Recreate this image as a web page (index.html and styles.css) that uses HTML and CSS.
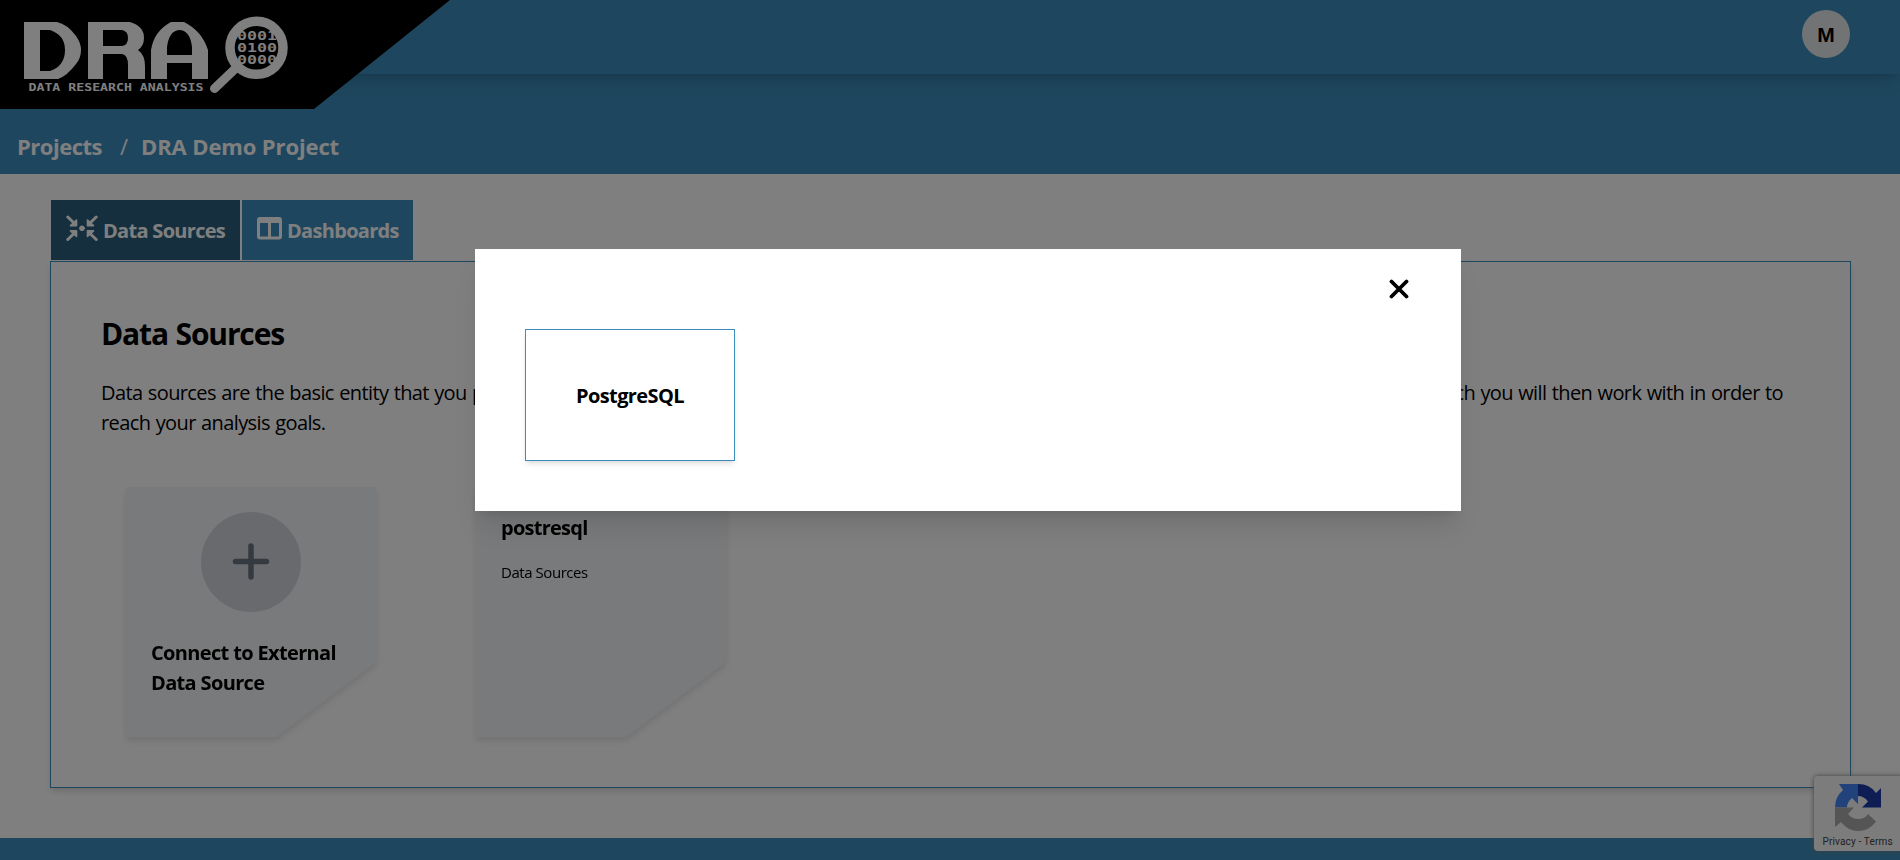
FILE: index.html
```html
<!DOCTYPE html>
<html lang="en">
<head>
<meta charset="utf-8">
<title>DRA Demo Project</title>
<link rel="stylesheet" href="styles.css">
</head>
<body>
<div class="page">
  <header class="topbar">
    <div class="avatar">M</div>
  </header>
  <div class="brand">
    <svg class="logo" width="270" height="80" viewBox="20 14 270 80" fill="#fff">
      <path fill-rule="evenodd" d="M24 22H57Q67 24 76 36Q81 43 81 50Q81 58 76 64Q67 76 58 79H24ZM40 30V71H50Q65 66 65 50Q65 35 50 30Z"/>
      <path fill-rule="evenodd" d="M88 22H130Q144 26 144 38Q144 46 138 50Q145 55 145 66V79H128V65Q128 55 122 54H103V79H88ZM103 30V46H122Q128 45 128 38Q128 31 122 30Z"/>
      <path fill-rule="evenodd" d="M151 79V50Q154 31 171 22H184Q202 31 208 50V79H192V63H167V79ZM167 55H192V47Q190 30 179 30Q169 31 167 47Z"/>
      <text class="tagline" x="28.500" y="91" textLength="175" lengthAdjust="spacingAndGlyphs">DATA RESEARCH ANALYSIS</text>
      <g class="digits">
        <text x="237" y="39.500" textLength="40" lengthAdjust="spacingAndGlyphs">0001</text>
        <text x="237" y="51.500" textLength="40" lengthAdjust="spacingAndGlyphs">0100</text>
        <text x="237" y="63.800" textLength="40" lengthAdjust="spacingAndGlyphs">0000</text>
      </g>
      <circle cx="256.500" cy="47.800" r="26.500" fill="none" stroke="#fff" stroke-width="9.500"/>
      <path d="M237 67L214.500 88.500" stroke="#fff" stroke-width="9" stroke-linecap="round"/>
    </svg>
  </div>
  <nav class="crumbs"><span class="crumb-home">Projects</span><span class="crumb-sep">/</span><span class="crumb-current">DRA Demo Project</span></nav>
  <main class="content">
    <div class="tabs">
      <div class="tab tab-active">
        <svg class="tab-icon" width="32" height="26" viewBox="0 0 32 26" fill="#fff" stroke="#fff" stroke-width="3" stroke-linecap="round" stroke-linejoin="round">
          <path d="M1.800 2L8 8M30.200 2L24 8M1.800 24.500L8 18.500M30.200 24.500L24 18.500"/>
          <path stroke-width="1.600" d="M10.500 5V10.700H4.500ZM21.500 5V10.700H27.500ZM10.500 21.500V15.800H4.500ZM21.500 21.500V15.800H27.500Z"/>
          <circle cx="16" cy="13.300" r="2.400" stroke-width="1"/>
        </svg>
        <span class="tab-label">Data Sources</span>
      </div>
      <div class="tab">
        <svg class="tab-icon" width="25" height="26" viewBox="0 0 25 26"><path fill="#fff" fill-rule="evenodd" d="M3 2H22Q25 2 25 5V21.500Q25 24.500 22 24.500H3Q0 24.500 0 21.500V5Q0 2 3 2ZM3 8V21.500H11V8ZM14 8V21.500H22V8Z"/></svg>
        <span class="tab-label">Dashboards</span>
      </div>
    </div>
    <section class="panel">
      <h1 class="title">Data Sources</h1>
      <p class="intro"><span class="intro-line"><span>Data sources are the basic entity that you provide</span><span>which you will then work with in order to</span></span><span class="intro-last">reach your analysis goals.</span></p>
      <div class="cards">
        <div class="card-shadow"><div class="card">
          <div class="plus"><svg width="38" height="38" viewBox="0 0 38 38"><path d="M19 3V34M3.500 18.500H34.500" stroke="#6b7280" stroke-width="5.500" stroke-linecap="round"/></svg></div>
          <div class="card-title connect">Connect to External<br>Data Source</div>
        </div></div>
        <div class="card-shadow"><div class="card">
          <div class="card-title db-name">postresql</div>
          <div class="card-sub">Data Sources</div>
        </div></div>
      </div>
    </section>
  </main>
  <footer class="footer"></footer>
</div>
<aside class="captcha">
  <svg width="48" height="48" viewBox="0 0 48 48">
    <path fill="#1c3aa9" d="M24 0Q36 0 42 9L47 4V23.500H28L34 17.500Q30 12 24 12Z"/>
    <path fill="#4285f4" d="M24 0V20L18 14Q13 18 13 23.500H1Q1 13 9 6L5 0Z"/>
    <path fill="#ababab" d="M1 23.500H20L14 30Q18 35 24 35Q31 35 34 30L42 37.500Q35 47 24 47Q14 47 7 38L1 43Z"/>
  </svg>
  <div class="captcha-text">Privacy - Terms</div>
</aside>
<div class="overlay">
  <div class="modal">
    <div class="modal-head"><svg width="20" height="20" viewBox="0 0 20 20"><path d="M2.500 2.500L17.500 17.500M17.500 2.500L2.500 17.500" stroke="#000" stroke-width="3.800" stroke-linecap="round"/></svg></div>
    <div class="option"><span>PostgreSQL</span></div>
  </div>
</div>
</body>
</html>
```

FILE: styles.css
```css
* { box-sizing: border-box; }
body { margin: 0; height: 860px; overflow: hidden; background: #fff; color: #000; font-family: "Open Sans", "Noto Sans", sans-serif; }
.page { display: flex; flex-direction: column; height: 860px; }
.topbar { position: relative; height: 74px; flex: none; display: flex; justify-content: flex-end; padding: 10px 50px 0 0; background: #3c8dbc; box-shadow: 0 10px 15px -3px rgba(0,0,0,.13), 0 4px 6px -4px rgba(0,0,0,.13); }
.avatar { width: 48px; height: 48px; border-radius: 50%; background: #e5e7eb; display: flex; align-items: center; justify-content: center; font: 700 21px "Liberation Sans", sans-serif; padding-top: 2px; }
.brand { position: absolute; top: 0; left: 0; width: 450px; height: 109px; padding: 14px 20px; background: #000; clip-path: polygon(0 0, 100% 0, 314px 100%, 0 100%); }
.logo { display: block; }
.tagline { font: bold 10px "DejaVu Sans Mono", monospace; }
.digits { font: bold 13px "DejaVu Sans Mono", monospace; }
.crumbs { height: 100px; flex: none; background: #3c8dbc; color: #fff; font-size: 22px; font-weight: 700; line-height: 30px; padding: 57px 17px 0; display: flex; }
.crumb-home { width: 103px; letter-spacing: -.5px; }
.crumb-sep { width: 21px; font-weight: 400; }
.crumb-current { letter-spacing: -.12px; }
.content { flex: 1; padding: 26px 49px 0 50px; }
.tabs { display: flex; gap: 2px; padding-left: 1px; height: 61px; }
.tab { height: 60px; width: 171px; background: #3c8dbc; color: #fff; display: flex; padding: 15px 15px 0; gap: 5px; }
.tab-active { width: 189px; background: #2a5f7f; }
.tab-icon { flex: none; }
.tab-label { font-size: 20px; font-weight: 700; line-height: 32px; white-space: nowrap; letter-spacing: -.7px; }
.panel { height: 527px; border: 1px solid #3c8dbc; padding: 50px; box-shadow: 0 4px 6px -1px rgba(0,0,0,.15); }
.title { margin: 0; font-size: 30px; line-height: 44px; letter-spacing: -1.15px; word-spacing: 1px; }
.intro { margin: 22px 0 0; font-size: 20px; line-height: 30px; letter-spacing: -.6px; word-spacing: .7px; }
.intro-line { display: flex; justify-content: space-between; width: 1682px; white-space: nowrap; }
.cards { display: flex; gap: 100px; padding: 49px 0 0 25px; }
.card-shadow { filter: drop-shadow(0 4px 3px rgba(0,0,0,.1)); }
.card { width: 250px; height: 250px; background: #f3f4f6; padding: 25px; clip-path: polygon(0 0, 100% 0, 100% 70%, 60% 100%, 0 100%); }
.plus { width: 100px; height: 100px; margin: 0 auto; border-radius: 50%; background: #d1d5db; display: flex; align-items: center; justify-content: center; }
.card-title { font-size: 20px; font-weight: 700; line-height: 30px; white-space: nowrap; letter-spacing: -.65px; }
.connect { margin-top: 26px; }
.db-name { padding-top: 1px; letter-spacing: -.75px; }
.card-sub { font-size: 15px; line-height: 24px; margin-top: 17px; letter-spacing: -.45px; }
.footer { height: 22px; flex: none; background: #3c8dbc; }
.captcha { position: absolute; left: 1814px; top: 776px; width: 90px; height: 75px; border-radius: 4px; background: #f9f9f9; box-shadow: 0 0 5px #808080; padding: 8px 0 0 20px; }
.captcha svg { display: block; }
.captcha-text { font: 10px/14px Roboto, sans-serif; letter-spacing: .15px; margin: 3px 0 0 -11.500px; color: #444; white-space: nowrap; }
.overlay { position: absolute; inset: 0; display: flex; justify-content: center; align-items: flex-start; padding: 249px 0 0 36px; background: rgba(0,0,0,.5); }
.modal { width: 986px; height: 262px; background: #fff; padding: 30px 50px; box-shadow: 0 20px 25px -5px rgba(0,0,0,.1), 0 8px 10px -6px rgba(0,0,0,.1); }
.modal-head { display: flex; justify-content: flex-end; height: 50px; padding-right: 2px; }
.option { width: 210px; height: 132px; border: 1px solid #3c8dbc; display: flex; align-items: center; justify-content: center; font-size: 20px; font-weight: 700; letter-spacing: -.6px; box-shadow: 0 4px 6px -1px rgba(0,0,0,.1), 0 2px 4px -2px rgba(0,0,0,.1); }
```
